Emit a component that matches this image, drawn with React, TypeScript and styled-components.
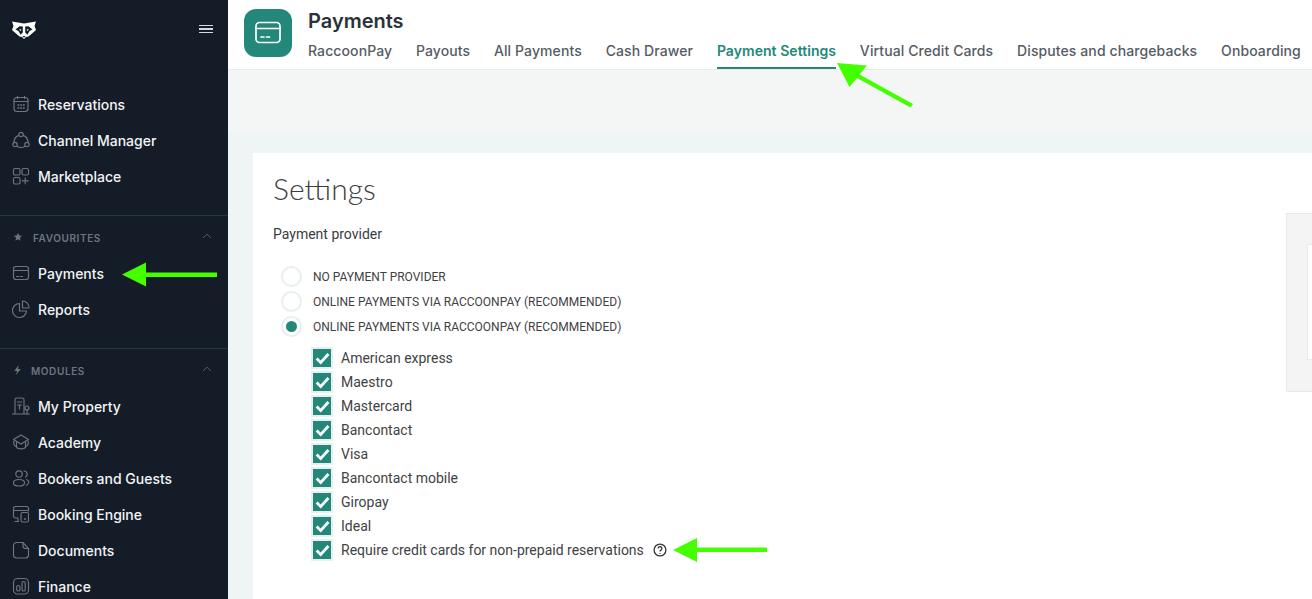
import React from 'react';
import styled, { createGlobalStyle } from 'styled-components';

const GlobalStyle = createGlobalStyle`
  html, body {
    margin: 0;
    padding: 0;
    height: 100%;
    overflow: hidden;
    background: #ffffff;
  }
  * {
    box-sizing: border-box;
  }
`;

const iconPaths: Record<string, React.ReactNode> = {
  calendar: (
    <>
      <rect x="2" y="2.500" width="14" height="14" rx="3" />
      <path d="M2 6.500h14M5.500 1.200v2.300M12.500 1.200v2.300" />
      <path d="M6 10h.8M8.700 10h.8M11.400 10h.8M6 13h.8M8.700 13h.8M11.400 13h.8" strokeWidth="1.500" />
    </>
  ),
  channel: (
    <>
      <circle cx="9" cy="3.500" r="2.200" />
      <circle cx="3" cy="13.500" r="2.200" />
      <circle cx="15" cy="13.500" r="2.200" />
      <path d="M6.800 4.400A7.400 7.400 0 0 0 2 11.400M11.200 4.400A7.400 7.400 0 0 1 16 11.400M5.200 15.500a8 8 0 0 0 7.600 0" />
    </>
  ),
  market: (
    <>
      <rect x="1.500" y="1.500" width="6.500" height="6.500" rx="1.500" />
      <rect x="10" y="1.500" width="6.500" height="6.500" rx="1.500" />
      <rect x="1.500" y="10.500" width="6.500" height="6.500" rx="1.500" />
      <path d="M13.200 10.800v6M10.200 13.800h6" />
    </>
  ),
  card: (
    <>
      <rect x="1.500" y="2.500" width="15" height="13" rx="2.500" />
      <path d="M1.500 6.500h15M4.500 12.500h2.500M8.500 12.500h2" />
    </>
  ),
  reports: (
    <>
      <path d="M7.500 3.500a7 7 0 1 0 7 7.500H7.500V3.500Z" />
      <path d="M10.500 1a6.500 6.500 0 0 1 6.500 7h-6.500V1Z" />
    </>
  ),
  property: (
    <>
      <path d="M3 17V2.800A1.800 1.800 0 0 1 4.800 1h5.400A1.800 1.800 0 0 1 12 2.800V17M.5 17h17" />
      <path d="M5.500 5h4M5.500 8h4M7.500 8v4" />
      <circle cx="15" cy="11" r="2" />
      <path d="M15 13v4" />
    </>
  ),
  academy: (
    <>
      <path d="M9 2 16.500 6.500 9 11 1.500 6.500 9 2Z" strokeLinejoin="round" />
      <path d="M2 8c-.8 2.500.2 4.500 2 5.500M16 8c.8 2.500-.2 4.500-2 5.500M4.500 9v5c1 2.500 8 2.500 9 0V9" />
    </>
  ),
  guests: (
    <>
      <circle cx="7" cy="5" r="3.200" />
      <path d="M7 10.500c-3.500 0-5.500 1.200-5.500 3.200S3.500 17 7 17s5.500-1.300 5.500-3.300S10.500 10.500 7 10.500Z" />
      <path d="M12 2a3.200 3.200 0 0 1 1.500 6M14.500 10.500c1.500.5 2.200 1.500 2.200 2.800s-.7 2.300-2.200 2.900" />
    </>
  ),
  engine: (
    <>
      <path d="M6 13H3.500a2 2 0 0 1-2-2V3.500a2 2 0 0 1 2-2h11a2 2 0 0 1 2 2V6M1.500 5.500h15M3 16.500h3.500M6 13v3.500" />
      <rect x="9" y="7.500" width="7.500" height="9.500" rx="1.500" />
      <path d="M12.500 14h1" strokeWidth="1.500" />
    </>
  ),
  documents: (
    <path d="M11 1.500H4.500a3 3 0 0 0-3 3V14a3 3 0 0 0 3 3h9a3 3 0 0 0 3-3V7.500L11 1.500Zm0 0V5a2.500 2.500 0 0 0 2.500 2.500h3" />
  ),
  finance: (
    <>
      <rect x="1.500" y="1.500" width="15" height="15.500" rx="4" />
      <rect x="4.700" y="8.500" width="3.200" height="5.500" rx="1.600" />
      <rect x="10" y="4.500" width="3.200" height="9.500" rx="1.600" />
    </>
  ),
};

function NavIcon({ name }: { name: string }) {
  return (
    <IconSvg viewBox="0 0 18 18" fill="none" stroke="currentColor" strokeWidth="1.150" strokeLinecap="round">
      {iconPaths[name]}
    </IconSvg>
  );
}

function Chevron() {
  return (
    <ChevronSvg viewBox="0 0 10 6" fill="none" stroke="currentColor" strokeWidth="1">
      <path d="M1 5 5 1.200 9 5" />
    </ChevronSvg>
  );
}

function Logo() {
  return (
    <LogoSvg viewBox="0 0 24 18" fill="#ffffff">
      <path d="M0 0.500 6 1.500 12 2.500 18 1.500 24 0.500 22.500 5 24 9 20 12.500 16.500 15.500 14 16 12 18 10 16 7.500 15.500 4 12.500 0 9 1.500 5Z" />
      <path fill="#141c28" d="M10.800 5.500 7.500 5.200 3.500 8.500 6.500 10 8.500 13.800 10.800 11.500ZM13.200 5.500 16.500 5.200 20.500 8.500 17.500 10 15.500 13.800 13.200 11.500Z" />
      <path d="M7 7.800 9.300 8.600 8.800 10.300ZM17 7.800 14.700 8.600 15.200 10.300Z" />
      <path fill="#141c28" d="M10.500 15h3L12 16.800Z" />
    </LogoSvg>
  );
}

const topItems = [
  { icon: 'calendar', label: 'Reservations' },
  { icon: 'channel', label: 'Channel Manager' },
  { icon: 'market', label: 'Marketplace' },
];
const favouriteItems = [
  { icon: 'card', label: 'Payments' },
  { icon: 'reports', label: 'Reports' },
];
const moduleItems = [
  { icon: 'property', label: 'My Property' },
  { icon: 'academy', label: 'Academy' },
  { icon: 'guests', label: 'Bookers and Guests' },
  { icon: 'engine', label: 'Booking Engine' },
  { icon: 'documents', label: 'Documents' },
  { icon: 'finance', label: 'Finance' },
];

const tabs = ['RaccoonPay', 'Payouts', 'All Payments', 'Cash Drawer', 'Payment Settings', 'Virtual Credit Cards', 'Disputes and chargebacks', 'Onboarding'];

const providers = [
  { label: 'No payment provider', checked: false },
  { label: 'Online payments via RaccoonPay (recommended)', checked: false },
  { label: 'Online payments via RaccoonPay (recommended)', checked: true },
];

const methods = ['American express', 'Maestro', 'Mastercard', 'Bancontact', 'Visa', 'Bancontact mobile', 'Giropay', 'Ideal'];

function CheckRow({ label, children }: { label: string; children?: React.ReactNode }) {
  return (
    <CheckItem>
      <CheckBox>
        <svg width="15" height="13" viewBox="0 0 14 12" fill="none" stroke="#ffffff" strokeWidth="2.600">
          <path d="M1.500 6 5.300 9.800 12.500 1.800" />
        </svg>
      </CheckBox>
      <CheckLabel>{label}</CheckLabel>
      {children}
    </CheckItem>
  );
}

export default function App() {
  return (
    <Page>
      <GlobalStyle />
      <Sidebar>
        <SideTop>
          <Logo />
          <Burger>
            <span />
            <span />
            <span />
          </Burger>
        </SideTop>
        <NavGroup>
          {topItems.map((item) => (
            <NavRow key={item.label}>
              <NavIcon name={item.icon} />
              {item.label}
            </NavRow>
          ))}
        </NavGroup>
        <NavSection>
          <SectionHead>
            <SectionIcon viewBox="0 0 12 12" fill="currentColor">
              <path d="M6 1 7.400 4.300 11 4.600 8.300 6.900 9.100 10.500 6 8.600 2.900 10.500 3.700 6.900 1 4.600 4.600 4.300Z" />
            </SectionIcon>
            <SectionTitle>Favourites</SectionTitle>
            <Chevron />
          </SectionHead>
          {favouriteItems.map((item) => (
            <NavRow key={item.label}>
              <NavIcon name={item.icon} />
              {item.label}
            </NavRow>
          ))}
        </NavSection>
        <NavSection>
          <SectionHead>
            <BoltIcon viewBox="0 0 10 12" fill="currentColor">
              <path d="M6.200.5 1.500 7h3L3.500 11.500 8.500 4.800h-3Z" />
            </BoltIcon>
            <SectionTitle>Modules</SectionTitle>
            <Chevron />
          </SectionHead>
          {moduleItems.map((item) => (
            <NavRow key={item.label}>
              <NavIcon name={item.icon} />
              {item.label}
            </NavRow>
          ))}
        </NavSection>
      </Sidebar>

      <Main>
        <Header>
          <AppIcon>
            <svg width="28" height="26" viewBox="0 0 28 26" fill="none" stroke="#ffffff" strokeWidth="1.700" strokeLinecap="round">
              <rect x="2" y="2.500" width="24" height="20" rx="3.500" />
              <path d="M2 8.500h24M7 17h3M12.500 17h3" />
            </svg>
          </AppIcon>
          <HeaderText>
            <PageTitle>Payments</PageTitle>
            <Tabs>
              {tabs.map((tab) => (
                <Tab key={tab} $active={tab === 'Payment Settings'}>
                  {tab}
                </Tab>
              ))}
            </Tabs>
          </HeaderText>
        </Header>
        <Toolbar />
        <Content>
          <Card>
            <CardBody>
              <Heading>Settings</Heading>
              <FieldLabel>Payment provider</FieldLabel>
              <RadioList>
                {providers.map((p, i) => (
                  <RadioRow key={i}>
                    <RadioCircle $checked={p.checked} />
                    <RadioLabel>{p.label}</RadioLabel>
                  </RadioRow>
                ))}
              </RadioList>
              <CheckList>
                {methods.map((m) => (
                  <CheckRow key={m} label={m} />
                ))}
                <CheckRow label="Require credit cards for non-prepaid reservations">
                  <HelpIcon viewBox="0 0 14 14" fill="none" stroke="#333333" strokeWidth="1.300">
                    <circle cx="7" cy="7" r="5.900" />
                    <path d="M5.100 5.500a1.900 1.900 0 1 1 2.900 1.600c-.7.400-1 .8-1 1.500" />
                    <path d="M7 10v.8" strokeWidth="1.300" />
                  </HelpIcon>
                </CheckRow>
              </CheckList>
            </CardBody>
            <SidePanel>
              <SidePanelInner />
            </SidePanel>
          </Card>
        </Content>
      </Main>

      <Arrow viewBox="0 0 1312 599" fill="#44ff00">
        <path d="M122 274.500 146 262.500V272.500H217V277H146V286.500Z" />
        <path d="M837 63 867 65.500 859.500 74.500 913 104 910.500 107.500 857 78 849.500 87Z" />
        <path d="M673 550 697 538V547.500H767V552H697V562Z" />
      </Arrow>
    </Page>
  );
}

const Page = styled.div`
  position: relative;
  display: flex;
  width: 1312px;
  height: 599px;
  overflow: hidden;
  font-family: 'Inter', sans-serif;
`;

const Sidebar = styled.aside`
  flex: 0 0 228px;
  height: 599px;
  background: #141c28;
  color: #f2f4f5;
  overflow: hidden;
`;

const SideTop = styled.div`
  display: flex;
  align-items: center;
  justify-content: space-between;
  height: 59px;
  padding: 1px 15px 0 12px;
`;

const LogoSvg = styled.svg`
  width: 24px;
  height: 18px;
`;

const Burger = styled.div`
  display: flex;
  flex-direction: column;
  gap: 2px;
  width: 14px;
  margin-top: -2px;

  span {
    display: block;
    height: 1.500px;
    background: #d5d8dc;
  }
`;

const NavGroup = styled.nav`
  padding-top: 28px;
  padding-bottom: 20px;
`;

const NavSection = styled.section`
  border-top: 1px solid #2b3441;
  padding-bottom: 20px;
`;

const SectionHead = styled.div`
  display: flex;
  align-items: center;
  height: 40px;
  padding: 4px 16px 0 13px;
  color: #6f7580;
`;

const SectionIcon = styled.svg`
  width: 10px;
  height: 10px;
  margin-right: 10px;
  margin-top: -2px;
`;

const BoltIcon = styled.svg`
  width: 9px;
  height: 12px;
  margin-right: 9px;
  margin-top: -2px;
`;

const SectionTitle = styled.span`
  flex: 1;
  font-size: 10px;
  font-weight: 600;
  letter-spacing: 0.6px;
  text-transform: uppercase;
`;

const ChevronSvg = styled.svg`
  width: 10px;
  height: 6px;
  color: #565c66;
  margin-top: -4px;
`;

const NavRow = styled.div`
  display: flex;
  align-items: center;
  height: 36px;
  padding-left: 12px;
  padding-bottom: 2px;
  font-size: 14px;
  font-weight: 500;
  white-space: nowrap;
`;

const IconSvg = styled.svg`
  flex: 0 0 18px;
  width: 18px;
  height: 18px;
  margin-right: 8px;
  color: #6f7580;
`;

const Main = styled.main`
  flex: 1;
  min-width: 0;
  display: flex;
  flex-direction: column;
  height: 599px;
`;

const Header = styled.header`
  flex: 0 0 70px;
  display: flex;
  padding: 9px 0 0 16px;
  background: #ffffff;
  border-bottom: 1px solid #e9ebeb;
`;

const AppIcon = styled.div`
  flex: 0 0 48px;
  display: flex;
  align-items: center;
  justify-content: center;
  width: 48px;
  height: 48px;
  border-radius: 12px;
  background: #23877a;
`;

const HeaderText = styled.div`
  margin-left: 16px;
  white-space: nowrap;
`;

const PageTitle = styled.h1`
  margin: 0;
  height: 24px;
  font-size: 20px;
  line-height: 24px;
  font-weight: 600;
  color: #2b3138;
`;

const Tabs = styled.div`
  display: flex;
  gap: 23.8px;
  margin-top: 8px;
`;

const Tab = styled.div<{ $active?: boolean }>`
  height: 28px;
  font-size: 14px;
  line-height: 20px;
  font-weight: ${(p) => (p.$active ? 600 : 500)};
  letter-spacing: ${(p) => (p.$active ? '0.05px' : '0.1px')};
  color: ${(p) => (p.$active ? '#23877a' : '#555c65')};
  border-bottom: 2px solid ${(p) => (p.$active ? '#23877a' : 'transparent')};
`;

const Toolbar = styled.div`
  flex: 0 0 63px;
  background: #f3f6f5;
`;

const Content = styled.div`
  flex: 1;
  min-height: 0;
  padding: 20px 0 0 25px;
  background: #eff4f4;
`;

const Card = styled.div`
  display: flex;
  justify-content: space-between;
  height: 100%;
  background: #ffffff;
`;

const CardBody = styled.div`
  padding: 16px 0 0 20px;
`;

const Heading = styled.h2`
  margin: 0;
  font-family: 'Lato', sans-serif;
  font-size: 30px;
  line-height: 38px;
  font-weight: 300;
  color: #3c3f42;
`;

const FieldLabel = styled.div`
  margin-top: 17px;
  font-family: 'Roboto', sans-serif;
  font-size: 14px;
  line-height: 20px;
  color: #3a3d40;
`;

const RadioList = styled.div`
  display: flex;
  flex-direction: column;
  margin-top: 20px;
  margin-left: 8px;
`;

const RadioRow = styled.div`
  display: flex;
  align-items: center;
  height: 25px;
`;

const RadioCircle = styled.span<{ $checked?: boolean }>`
  flex: 0 0 21px;
  display: flex;
  align-items: center;
  justify-content: center;
  width: 21px;
  height: 21px;
  border: 2px solid #e7f0ee;
  border-radius: 50%;
  background: #ffffff;

  &::after {
    content: '';
    display: ${(p) => (p.$checked ? 'block' : 'none')};
    width: 11px;
    height: 11px;
    border-radius: 50%;
    background: #23877a;
  }
`;

const RadioLabel = styled.span`
  margin-left: 11px;
  font-family: 'Roboto', sans-serif;
  font-size: 12px;
  color: #3f4245;
  text-transform: uppercase;
  white-space: nowrap;
`;

const CheckList = styled.div`
  display: flex;
  flex-direction: column;
  margin-top: 7px;
  margin-left: 38px;
`;

const CheckItem = styled.div`
  display: flex;
  align-items: center;
  height: 24px;
`;

const CheckBox = styled.span`
  flex: 0 0 22px;
  display: flex;
  align-items: center;
  justify-content: center;
  width: 22px;
  height: 22px;
  border: 2px solid #e7f0ee;
  background: #23877a;
`;

const CheckLabel = styled.span`
  margin-left: 8px;
  font-family: 'Roboto', sans-serif;
  font-size: 14px;
  color: #3f4245;
  white-space: nowrap;
`;

const HelpIcon = styled.svg`
  width: 14px;
  height: 14px;
  margin-left: 9px;
`;

const SidePanel = styled.div`
  flex: 0 0 26px;
  display: flex;
  align-items: center;
  align-self: flex-start;
  justify-content: flex-end;
  height: 179px;
  margin-top: 60px;
  background: #f4f4f4;
  border: 1px solid #e9e9e9;
  border-right: 0;
`;

const SidePanelInner = styled.div`
  width: 5px;
  height: 116px;
  margin-top: -1px;
  background: #ffffff;
  border: 1px solid #e9e9e9;
  border-right: 0;
`;

const Arrow = styled.svg`
  position: absolute;
  inset: 0;
  width: 1312px;
  height: 599px;
  pointer-events: none;
`;
